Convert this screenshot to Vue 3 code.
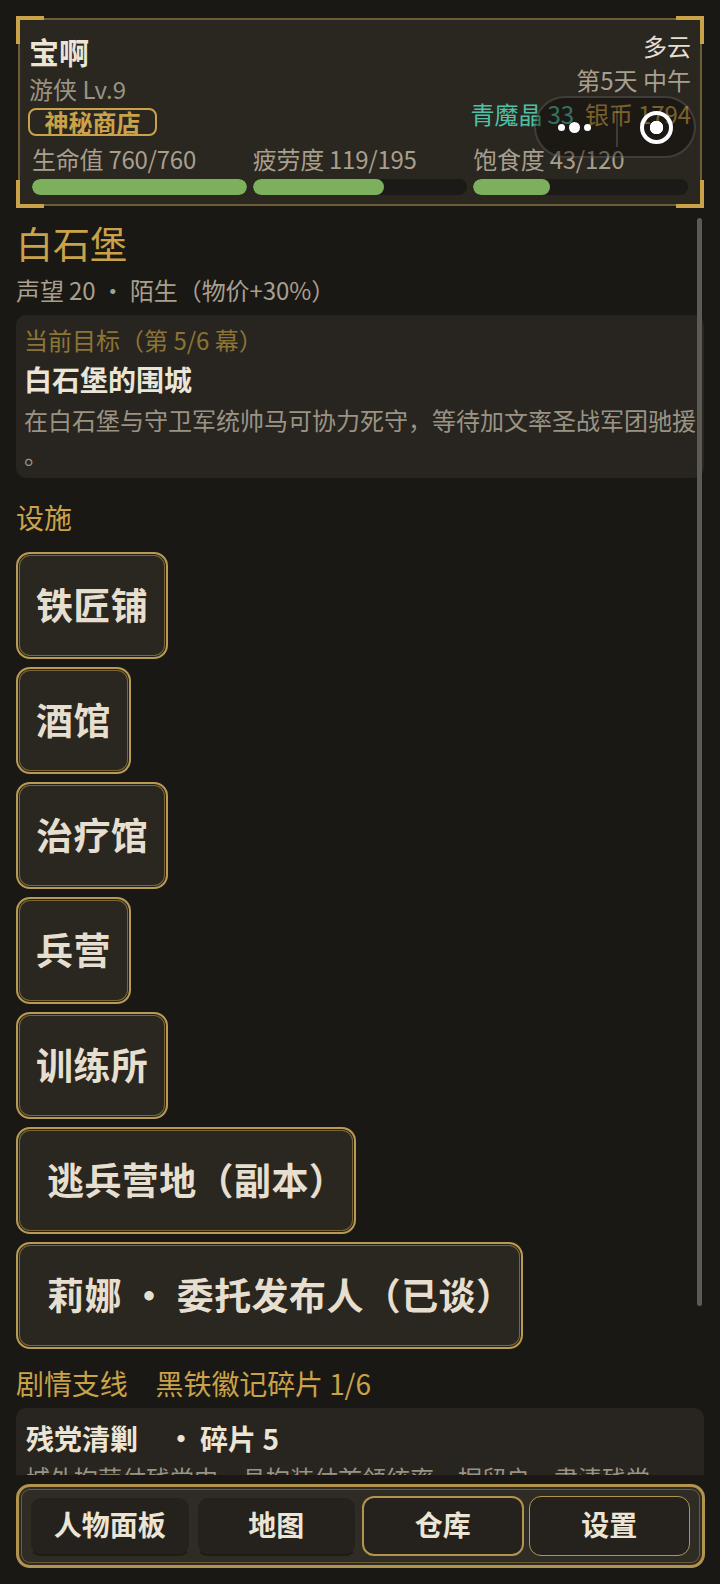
<template>
  <div class="page">
    <header class="hud">
      <i class="corner tl"></i><i class="corner tr"></i><i class="corner bl"></i><i class="corner br"></i>
      <div class="hud-top">
        <div class="who">
          <div class="name">宝啊</div>
          <div class="job">游侠 Lv.9</div>
          <div class="badge">神秘商店</div>
        </div>
        <div class="info">
          <div class="weather">多云</div>
          <div class="day">第5天 中午</div>
          <div class="money"><span class="crystal">青魔晶 33</span><span class="silver">银币 1794</span></div>
        </div>
      </div>
      <div class="stats">
        <div v-for="s in stats" :key="s.label" class="stat">
          <div class="stat-label">{{ s.label }} {{ s.cur }}/{{ s.max }}</div>
          <div class="track"><div class="fill" :style="{ width: (s.cur / s.max) * 100 + '%' }"></div></div>
        </div>
      </div>
    </header>

    <!-- 小程序胶囊按钮 -->
    <div class="capsule">
      <div class="cap-dots"><i></i><i class="big"></i><i></i></div>
      <div class="cap-line"></div>
      <div class="cap-rec"><i></i></div>
    </div>

    <main class="scroll">
      <div class="scrollbar"></div>
      <h1 class="city">白石堡</h1>
      <div class="rep">声望 20 · 陌生（物价+30%）</div>
      <section class="panel goal">
        <div class="goal-tag">当前目标（第 5/6 幕）</div>
        <div class="goal-title">白石堡的围城</div>
        <p class="desc">在白石堡与守卫军统帅马可协力死守，等待加文率圣战军团驰援。</p>
      </section>
      <div class="sec">设施</div>
      <div class="list">
        <div v-for="f in facilities" :key="f" class="fac" :class="{ wide: f.length > 4 }">{{ f }}</div>
      </div>
      <div class="sec side"><span>剧情支线</span><span>黑铁徽记碎片 1/6</span></div>
      <section class="panel quest">
        <div class="quest-title">残党清剿<span class="gap">·</span>碎片 5</div>
        <p class="desc">城外拘茸仗残党中，县拘装仗首领统率，据留户，肃清残党</p>
      </section>
    </main>

    <nav class="nav">
      <div v-for="n in navs" :key="n.t" class="nav-btn" :class="n.c">{{ n.t }}</div>
    </nav>
  </div>
</template>

<script setup>
const stats = [
  { label: "生命值", cur: 760, max: 760 },
  { label: "疲劳度", cur: 119, max: 195 },
  { label: "饱食度", cur: 43, max: 120 },
];
const facilities = ["铁匠铺", "酒馆", "治疗馆", "兵营", "训练所", "逃兵营地（副本）", "莉娜 · 委托发布人（已谈）"];
const navs = [
  { t: "人物面板", c: "" },
  { t: "地图", c: "" },
  { t: "仓库", c: "active" },
  { t: "设置", c: "line" },
];
</script>

<style>
html, body { margin: 0; background: #1a1814; }
</style>

<style scoped>
.page {
  position: relative; width: 720px; height: 1584px; overflow: hidden; display: flex; flex-direction: column;
  background: #1a1814; color: #ece5d6; font-family: "Noto Sans CJK SC", "Noto Sans", sans-serif; font-size: 24px;
}
.hud {
  position: relative; margin: 18px 18px 0 18px; height: 188px; box-sizing: border-box; padding: 11px 9px 0 9px; flex: none;
  background: #2a2620; border: 2px solid #6e5c34;
}
.corner { position: absolute; width: 24px; height: 24px; border: 0 solid #c9a24a; }
.tl { left: -4px; top: -4px; border-width: 4px 0 0 4px; }
.tr { right: -4px; top: -4px; border-width: 4px 4px 0 0; }
.bl { left: -4px; bottom: -4px; border-width: 0 0 4px 4px; }
.br { right: -4px; bottom: -4px; border-width: 0 4px 4px 0; }
.hud-top { display: flex; justify-content: space-between; }
.name { font-size: 30px; font-weight: 700; line-height: 40px; }
.job { color: #9a9384; line-height: 36px; }
.badge {
  width: 129px; box-sizing: border-box; height: 28px; line-height: 24px; margin: 1px 0 0 -1px; text-align: center;
  border: 2px solid #c9a24a; border-radius: 8px; color: #c9a24a; font-weight: 700;
}
.info { text-align: right; line-height: 34px; color: #a89f8e; margin-top: -2px; }
.weather { color: #e6dfd0; }
.money { display: flex; gap: 11px; letter-spacing: -.1px; }
.crystal { color: #4fc0a4; }
.silver { color: #c9a24a; }
.stats { display: flex; gap: 6px; margin: 5px 3px 0 3px; }
.stat { flex: 1; }
.stat-label { color: #a89f8e; line-height: 36px; margin-bottom: 2px; letter-spacing: -.25px; }
.track { height: 16px; border-radius: 8px; background: #1c1a16; overflow: hidden; }
.fill { height: 100%; border-radius: 8px; background: #7cb05c; }
.capsule {
  position: absolute; left: 534px; top: 96px; width: 162px; height: 62px; box-sizing: border-box; display: flex; align-items: center;
  border: 2px solid rgba(255, 255, 255, .16); border-radius: 31px; background: rgba(10, 8, 5, .42);
}
.cap-dots { width: 76px; margin-right: 4px; display: flex; align-items: center; justify-content: center; gap: 4px; }
.cap-dots i { width: 7px; height: 7px; border-radius: 50%; background: #fff; }
.cap-dots i.big { width: 11px; height: 11px; }
.cap-line { width: 2px; height: 40px; background: rgba(255, 255, 255, .16); }
.cap-rec { flex: 1; display: flex; justify-content: center; }
.cap-rec i {
  width: 33px; height: 33px; box-sizing: border-box; border: 4px solid #fff; border-radius: 50%; position: relative;
  background: radial-gradient(circle, #fff 0 6.5px, transparent 7px);
}
.scroll { position: relative; flex: 1; min-height: 0; overflow: hidden; padding: 15px 16px 0; margin-bottom: 9px; }
.scrollbar { position: absolute; right: 18px; top: 12px; width: 5px; height: 1088px; border-radius: 3px; background: #5c5a55; }
.city { margin: 0; font-size: 37px; font-weight: 400; line-height: 44px; color: #c9a24a; }
.rep { margin-top: 7px; line-height: 36px; color: #a89f8e; letter-spacing: -.1px; }
.panel { background: #282520; border-radius: 10px; box-sizing: border-box; }
.goal { margin-top: 7px; padding: 7px 8px; height: 163px; }
.goal-tag { line-height: 36px; color: #8c7434; }
.goal-title { font-size: 28px; font-weight: 700; line-height: 40px; margin: 1px 0 4px; }
.desc { margin: 0; line-height: 34px; color: #9a9384; line-break: anywhere; word-break: break-all; }
.sec { margin-top: 19px; font-size: 28px; line-height: 40px; color: #c9a24a; }
.list { display: flex; flex-direction: column; align-items: flex-start; gap: 8px; margin-top: 15px; }
.fac {
  height: 107px; box-sizing: border-box; padding: 0 18px 3px; display: flex; align-items: center; letter-spacing: .4px;
  font-size: 37px; font-weight: 700; color: #e6dfcf; background: #2a2620; border: 2px solid #b89a52; border-radius: 14px;
  box-shadow: inset 0 0 0 1px #24211b, inset 0 0 0 2px #7a6638;
}
.fac.wide { padding: 0 8px 3px 29px; }
.side { display: flex; gap: 28px; margin-top: 14px; letter-spacing: -.1px; }
.quest { margin-top: 5px; padding: 8px 10px; }
.quest-title { font-size: 28px; font-weight: 700; line-height: 45px; }
.gap { margin: 0 5px 0 29px; }
.nav {
  flex: none; height: 84px; box-sizing: border-box; margin: 0 15px 16px 16px; padding: 9px 12px 9px 10px;
  display: grid; grid-template-columns: repeat(4, 1fr); gap: 5px;
  background: #2f2b25; border: 3px solid #b2944f; border-radius: 14px; box-shadow: inset 0 0 0 2px #2f2b25, inset 0 0 0 3px #6e5c34;
}
.nav-btn {
  display: flex; align-items: center; justify-content: center; font-size: 28px; font-weight: 700; border-radius: 12px;
  background: #25221d; box-sizing: border-box; padding-bottom: 5px; border: 2px solid transparent; border-bottom-color: #1f1c18;
  background-clip: padding-box;
}
.nav-btn.active { border: 2px solid #b2944f; }
.nav-btn.line { border: 1px solid #b2944f; }
</style>
